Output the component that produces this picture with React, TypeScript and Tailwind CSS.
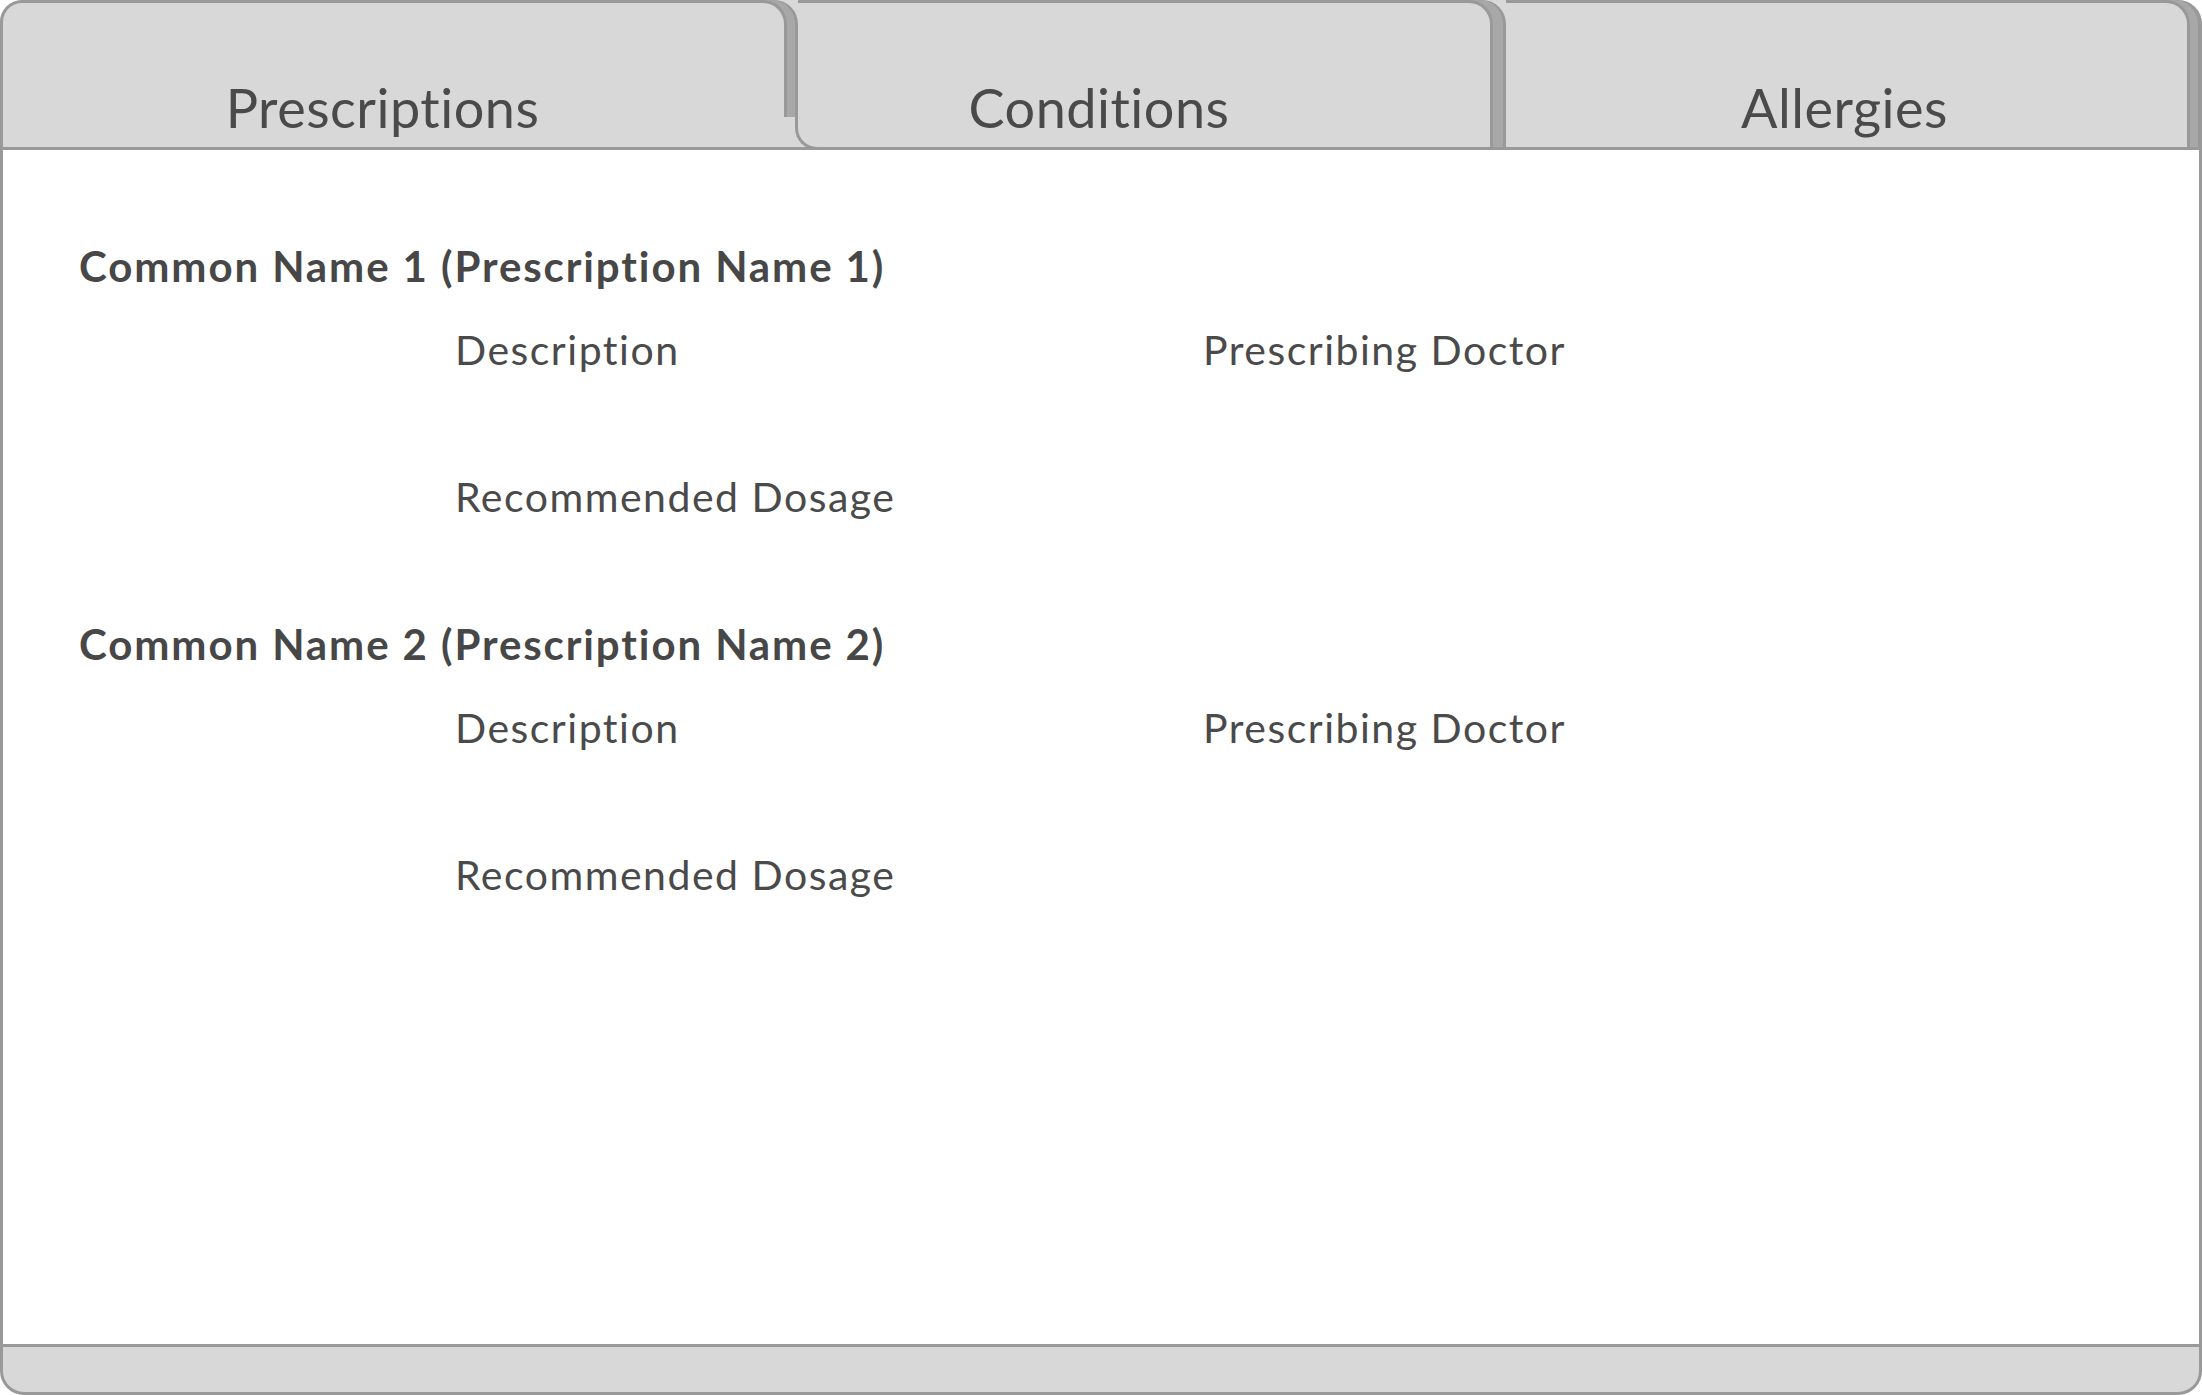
import type { ReactNode } from 'react';

const font = { fontFamily: 'Lato, "Open Sans", sans-serif' };

function Tab({ label, className, children }: { label: string; className: string; children?: ReactNode }) {
  return (
    <div className={`relative shrink-0 flex items-end justify-center pb-[12px] bg-[#d8d8d8] border-t-[3px] border-r-[3px] border-[#999999] ${className}`}>
      <span className="text-[54px] leading-none tracking-[0.5px] text-[#4a4a4a]">{label}</span>
      {children}
    </div>
  );
}

function Prescription({ name }: { name: string }) {
  return (
    <div className="flex flex-col">
      <h2 className="text-[42px] leading-none font-bold tracking-[1.9px] text-[#474747]">{name}</h2>
      <div className="ml-[376px] mt-[42px] grid grid-cols-[748px_auto] gap-y-[106px] text-[41px] leading-none tracking-[1.5px] text-[#4a4a4a]">
        <span>Description</span>
        <span>Prescribing Doctor</span>
        <span>Recommended Dosage</span>
      </div>
    </div>
  );
}

export default function App() {
  return (
    <div className="w-[2202px] h-[1395px] bg-white flex flex-col" style={font}>
      <div className="flex h-[150px] shrink-0 bg-[#d8d8d8] border-b-[3px] border-[#999999] rounded-tl-[22px] rounded-tr-[24px]">
        <Tab
          label="Prescriptions"
          className="w-[787px] pr-[22px] border-l-[3px] rounded-tl-[22px] rounded-tr-[24px] shadow-[8px_0_0_#a8a8a8,11px_0_0_#999999]"
        />
        <Tab
          label="Conditions"
          className="ml-[11px] w-[695px] pr-[90px] rounded-tr-[24px] shadow-[10px_0_0_#a8a8a8,13px_0_0_#999999]"
        >
          <div className="absolute bottom-0 left-[-19px] w-[50px] h-[30px] bg-[#d8d8d8]">
            <div className="absolute left-[16px] top-0 -bottom-[3px] w-[34px] border-l-[3px] border-b-[3px] border-[#999999] rounded-bl-[22px]" />
          </div>
        </Tab>
        <Tab
          label="Allergies"
          className="ml-[13px] w-[684px] pr-[4px] rounded-tr-[24px] shadow-[8px_0_0_#a8a8a8,12px_0_0_#999999]"
        />
      </div>

      <main className="flex-1 border-x-[3px] border-[#999999] pt-[95px] pl-[76px] flex flex-col gap-y-[106px]">
        <Prescription name="Common Name 1 (Prescription Name 1)" />
        <Prescription name="Common Name 2 (Prescription Name 2)" />
      </main>

      <div className="h-[51px] shrink-0 bg-[#d8d8d8] border-[3px] border-[#999999] rounded-b-[24px]" />
    </div>
  );
}
